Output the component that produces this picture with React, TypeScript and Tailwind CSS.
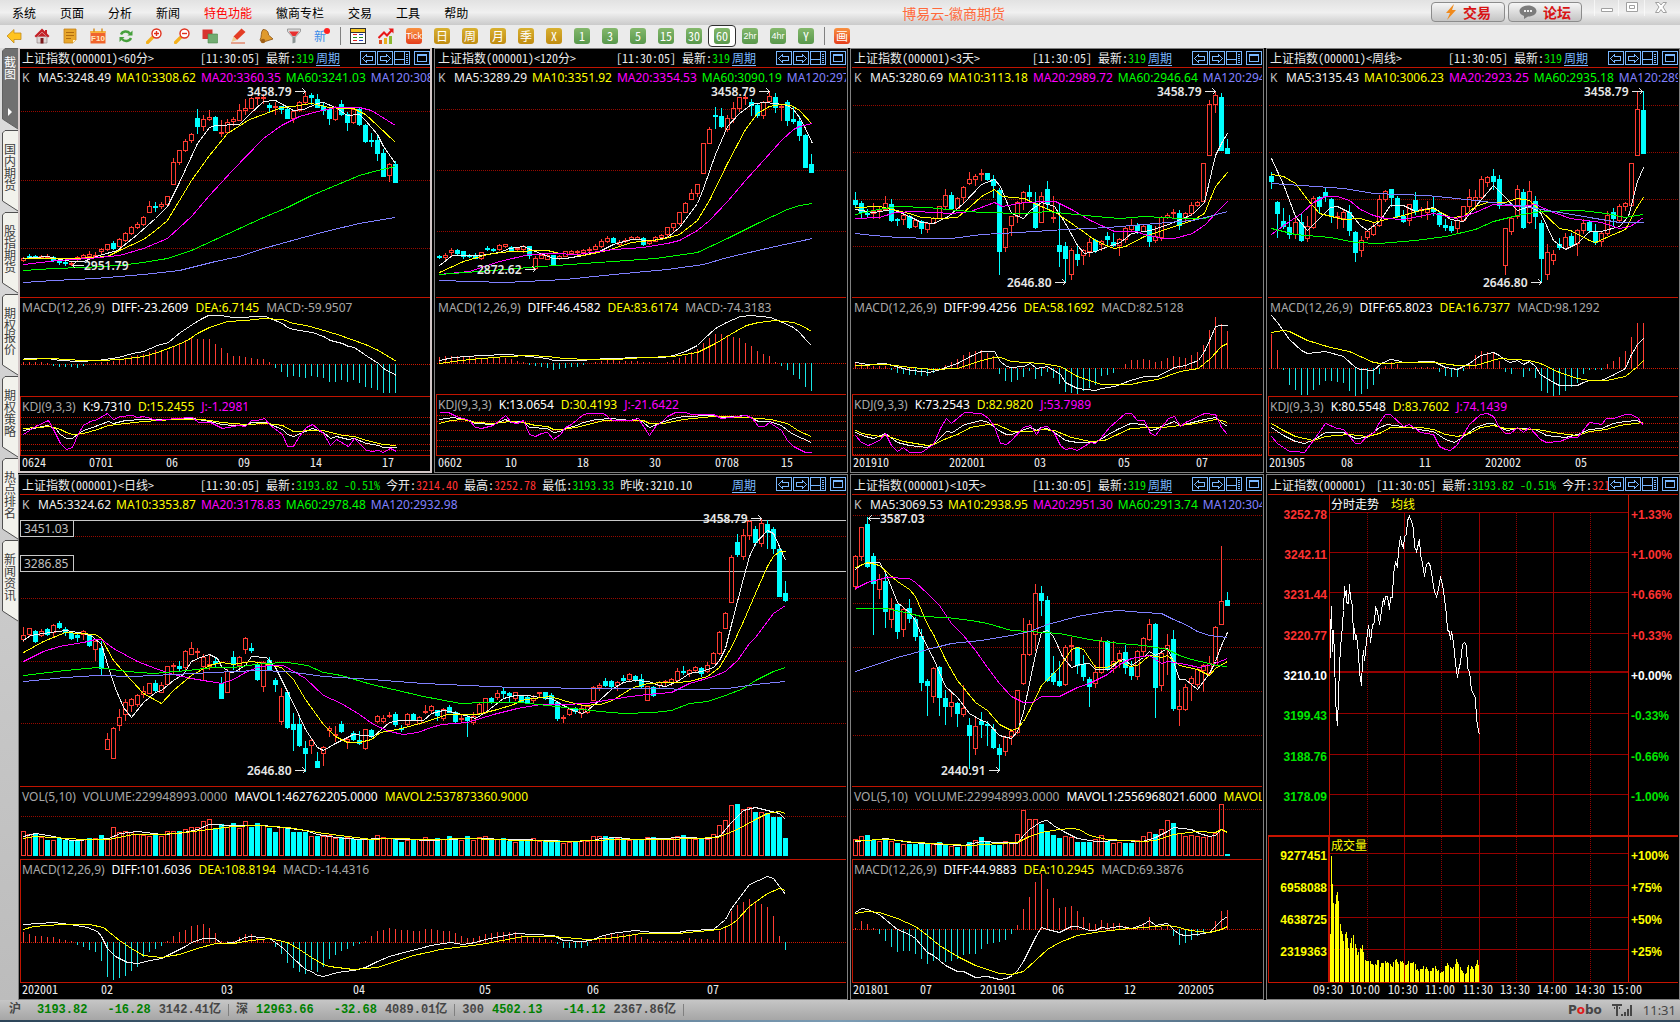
import React from 'react';
import clsx from 'clsx';

const UP = '#ff3c32';
const DOWN = '#00ffff';
const WHITE = '#f0f0f0';
const YELLOW = '#ffff00';
const MAGENTA = '#ff00ff';
const GREEN = '#00ff00';
const BLUE = '#8080ff';
const MA_COLORS = [WHITE, YELLOW, MAGENTA, GREEN, BLUE];

const TICK_FONT = "font-['Noto_Sans_Mono_CJK_SC','Noto_Sans_CJK_SC',monospace]";
const LABEL_FONT = "font-['Noto_Sans',sans-serif]";

// Readings are kept on a finer grid than the screen: px = (v - origin) / unit
interface Frame {
  x0: number;
  y0: number;
  kx: number;
  ky: number;
}

interface Mark {
  text: string;
  x: number;
  y: number;
  tip: number;
}

interface Tick {
  text: string;
  x: number;
}

interface LabelPart {
  text: string;
  color: string;
}

type PaneData =
  | { kind: 'k'; height: string; frame: Frame; label: LabelPart[]; grid: number[]; candles: string; lines: string[]; marks: Mark[]; levels?: boolean }
  | { kind: 'vol'; height: string; frame: Frame; label: LabelPart[]; grid: number[]; candles: string; tops: number[]; base: number; lines: string[] }
  | { kind: 'macd'; height: string; frame: Frame; label: LabelPart[]; zero: number; bars: number; diff: string; dea: string; boxed?: boolean }
  | { kind: 'kdj'; height: string; frame: Frame; label: LabelPart[]; grid: number[]; lines: string[] };

interface ChartData {
  title: string;
  wide?: boolean;
  selected?: boolean;
  tall?: boolean;
  panes: PaneData[];
  ticks: Tick[];
}

const toPoints = (s: string) => s.split(' ').map((p) => p.split(',').map(Number));

const px = (f: Frame, x: number) => Math.round((x - f.x0) / f.kx) + 0.5;
const py = (f: Frame, y: number) => Math.floor((y - f.y0) / f.ky) + 0.5;

function valueAt(points: number[][], x: number) {
  for (let i = 1; i < points.length; i++) {
    if (x <= points[i][0]) {
      const [ax, ay] = points[i - 1];
      const [bx, by] = points[i];
      return ay + ((by - ay) * (x - ax)) / (bx - ax);
    }
  }
  return points[points.length - 1][1];
}

const maLabel = (v: string[]): LabelPart[] => [
  { text: 'K', color: '#c0c0c0' },
  ...['MA5', 'MA10', 'MA20', 'MA60', 'MA120'].map((n, i) => ({ text: `${n}:${v[i]}`, color: MA_COLORS[i] })),
];
const macdLabel = (a: string, b: string, c: string): LabelPart[] => [
  { text: 'MACD(12,26,9)', color: '#a8a8a8' },
  { text: `DIFF:${a}`, color: '#fff' },
  { text: `DEA:${b}`, color: YELLOW },
  { text: `MACD:${c}`, color: '#a8a8a8' },
];
const kdjLabel = (a: string, b: string, c: string): LabelPart[] => [
  { text: 'KDJ(9,3,3)', color: '#a8a8a8' },
  { text: `K:${a}`, color: '#fff' },
  { text: `D:${b}`, color: YELLOW },
  { text: `J:${c}`, color: MAGENTA },
];
const volLabel = (a: string, b: string, c: string): LabelPart[] => [
  { text: 'VOL(5,10)', color: '#a8a8a8' },
  { text: `VOLUME:${a}`, color: '#a8a8a8' },
  { text: `MAVOL1:${b}`, color: '#fff' },
  { text: `MAVOL2:${c}`, color: YELLOW },
];

// ---- candles: u/d, then high, body top, body bottom, low ----

const K60 =
  'u771 775 781 785,d762 768 774 776,d766 770 772 774,u766 768 771 772,u762 768 770 774,d768 772 780 783,d779 783 788 793,d783 786 790 795,u785 789 794 797,u768 772 779 780,u764 766 772 776,u754 762 768 770,u758 765 768 772,u745 748 755 760,u733 734 747 752,d724 729 745 748,u716 718 738 740,u696 700 722 724,u680 682 700 702,u666 672 682 684,u648 652 674 676,u603 619 638 638,d608 618 621 635,u608 614 620 626,u588 589 612 616,u474 487 553 553,u451 451 488 494,u418 424 452 455,u399 404 422 427,d327 354 380 400,u346 357 380 392,u330 351 358 360,d350 351 392 392,u362 396 398 410,u357 368 397 398,u352 357 363 375,u312 331 361 362,u297 326 332 344,u292 294 325 325,u291 292 295 314,u282 291 294 310,d310 316 322 334,u308 319 322 344,d318 320 328 341,d326 327 354 354,u333 334 355 368,u305 308 332 334,u273 288 308 312,d281 287 291 312,d283 297 321 322,d306 319 330 342,d326 328 356 372,u319 321 359 361,d300 312 342 346,d336 342 368 392,u322 328 368 369,d326 328 374 376,d374 376 425 428,d399 420 425 440,d402 420 461 482,d448 459 530 530,u489 492 527 545,d483 492 548 548';

const K120 =
  'd766 769 772 776,u760 767 771 777,u744 750 757 765,d748 750 760 764,d753 754 770 776,d764 767 769 772,d760 765 775 776,u756 758 775 777,d738 744 749 752,d746 748 752 755,u734 736 748 752,u732 734 738 742,d739 741 750 752,u742 745 749 755,u735 740 747 756,d738 739 765 774,u770 775 805 808,u763 766 774 776,u762 766 777 778,d766 767 795 795,u766 770 775 778,u753 755 768 770,u752 754 760 762,u750 753 757 765,u748 752 756 766,u742 747 752 754,u734 739 748 749,u718 724 740 742,u709 715 723 726,d713 714 726 727,u720 726 732 738,u715 720 724 726,u708 713 717 719,u708 712 717 718,d711 716 733 736,u720 724 730 734,u710 713 724 725,u702 706 713 715,u681 682 702 712,u670 671 683 690,u636 637 671 672,u608 611 637 638,u567 580 598 598,u552 553 580 590,u430 431 520 520,u382 388 430 430,d321 345 349 386,d324 348 380 381,u345 355 387 395,u307 324 355 368,u291 292 325 334,u282 292 293 314,d297 308 315 345,d310 316 345 352,u304 308 347 355,u273 289 304 306,d279 293 323 336,u316 320 323 360,d300 306 360 377,d318 357 365 370,d350 365 407 422,d404 405 503 503,d462 494 518 518';

const K3D =
  'd576 600 614 622,d605 610 638 656,d628 640 641 650,u610 635 641 655,u622 630 635 655,u590 611 628 630,d598 612 662 664,d655 657 662 675,u644 645 658 674,d646 649 682 686,u657 661 678 683,d662 665 686 699,u668 669 689 697,u651 655 669 669,u619 620 654 656,u568 586 620 624,d576 586 624 628,u592 594 624 625,u560 563 593 610,u518 538 550 552,u522 530 538 555,u507 520 524 541,d519 521 538 541,d527 538 555 592,d565 570 753 822,u684 685 743 755,u649 650 676 705,u605 608 650 668,u573 577 608 627,d556 578 590 600,d576 611 683 684,u576 590 666 668,d543 569 610 625,u590 652 656 666,d612 735 753 798,d726 740 776 848,u744 751 823 838,d736 764 777 795,u748 751 765 793,u715 728 754 770,d718 720 752 758,u720 724 733 752,d698 710 719 735,d700 727 735 740,u714 718 735 767,u682 686 718 727,u657 675 688 692,d670 675 692 700,u672 678 693 695,d672 675 724 738,u680 708 722 726,u648 652 712 720,u641 645 653 656,u628 636 641 652,d630 640 676 688,u638 640 655 660,u608 617 640 645,u603 606 616 620,u489 490 604 604,u302 314 466 466,u274 287 314 338,d280 291 450 450,d417 444 461 461';

const KWEEK =
  'd517 530 543 565,d605 606 640 713,d626 663 680 684,d645 681 702 714,u648 668 703 715,d642 666 720 723,u648 679 716 723,u588 595 683 686,d589 592 620 640,d563 578 590 605,d594 597 650 666,u637 649 649 684,u630 637 655 682,d617 636 692 706,d695 698 758 785,u710 720 752 770,u690 694 713 718,u668 680 704 706,u586 598 675 678,u572 575 597 604,d567 568 593 620,d590 596 648 651,d630 649 664 667,u612 614 660 675,d576 601 630 643,u621 627 628 652,u603 626 636 658,d590 626 634 645,d634 641 674 678,d658 675 681 690,d665 678 690 697,u656 660 685 700,u618 620 660 662,u568 592 620 635,u571 593 600 627,u530 539 592 599,u530 533 547 558,d507 530 545 567,d527 538 617 624,u684 685 797 822,u649 656 694 704,u555 568 650 654,d567 577 683 684,u543 575 667 670,d588 605 650 684,d660 669 776 848,u732 758 823 838,u750 762 782 793,d714 733 743 747,u700 713 745 748,d700 708 735 740,u688 690 731 767,u657 670 690 700,d660 667 692 698,d672 696 728 732,u695 700 725 738,u635 645 700 706,d626 636 656 680,u614 619 660 668,u606 609 620 632,u489 490 617 618,u274 328 466 466,d275 330 461 461';

const KDAY =
  'u446 471 480 487,u449 450 468 474,d457 458 486 490,u454 458 471 472,d450 452 466 470,u440 441 462 476,d429 435 448 450,d447 453 462 470,d462 463 479 482,d466 469 476 486,u457 458 468 480,d466 467 497 500,u480 488 509 540,d488 508 565 582,u747 766 794 795,u732 734 820 820,u680 703 726 740,u651 661 694 712,u650 651 668 687,u638 641 667 672,u616 630 638 646,u605 606 634 636,d599 605 627 628,u604 613 632 633,u557 559 609 610,u550 556 559 582,d543 559 565 570,u514 516 561 566,u489 507 524 525,u506 516 518 532,u525 532 558 595,u526 552 558 566,d532 544 550 560,d590 607 650 650,u566 571 632 633,d516 533 550 566,u530 533 556 570,u476 478 510 522,d493 507 514 518,d550 553 594 598,u545 547 615 628,d532 541 569 570,d591 597 610 628,u620 642 715 722,d630 632 730 734,d692 722 738 796,d702 724 783 784,d772 790 806 855,u766 769 782 806,d803 827 844 846,u786 789 804 838,u728 735 740 758,u728 750 752 772,d713 724 744 746,u760 766 770 790,d744 747 764 768,d742 768 776 780,u737 738 792 793,d737 740 753 760,u698 700 714 718,u698 705 714 718,u690 696 698 702,d688 693 724 728,d726 733 735 744,u692 694 722 726,d692 693 710 712,u700 703 720 724,u670 686 688 692,' +
  'u670 672 684 690,d682 683 696 712,u678 681 706 712,d670 674 688 690,d687 688 713 718,u694 706 709 717,d697 704 711 758,u690 700 718 722,u662 666 692 693,u648 650 690 692,d645 650 660 664,u626 634 646 652,d617 628 636 648,d632 634 640 658,u631 633 648 654,d639 641 658 660,d644 647 659 662,u640 648 655 662,u631 632 634 646,d632 633 648 652,d636 639 662 665,d660 661 707 712,u697 704 707 718,u677 679 695 697,d674 677 686 692,u665 678 692 702,u670 673 688 692,u614 617 654 656,u606 611 618 626,d591 602 611 614,d599 602 616 620,u602 603 612 626,d585 593 598 602,u579 581 596 600,d585 586 594 600,d582 594 614 620,u614 615 654 656,d614 618 641 642,u602 604 612 618,u598 601 604 616,u591 595 604 612,u565 572 598 600,d557 571 573 580,u566 569 579 587,u558 560 568 572,d562 565 578 586,u548 555 571 574,u517 521 549 550,u460 461 521 525,u406 407 450 451,u244 248 376 377,d182 205 239 247,u170 185 245 254,u143 146 186 196,d160 170 207 215,u138 151 208 218,d143 156 178 222,d162 168 223 238,d213 227 358 358,d318 352 372 374';

const K10D =
  'u242 245 331 340,u162 163 245 258,d136 156 275 277,d238 245 323 466,u296 310 340 364,d286 318 402 448,u366 393 424 446,d382 383 459 479,u390 397 452 473,d367 392 422 434,d420 425 474 483,d452 472 604 627,d595 602 613 698,u560 563 643 661,d558 560 645 698,d626 648 672 724,u634 660 672 700,d660 664 692 728,u612 677 694 700,d706 727 755 848,u702 728 792 807,d690 715 723 760,d713 722 724 783,d722 737 787 790,d780 790 808 854,u758 759 800 811,u737 742 758 780,u626 627 745 748,u422 524 606 608,u427 439 525 527,u324 350 467 514,d330 352 372 412,d358 372 598 602,d530 579 600 608,d545 600 613 615,u497 504 610 612,u475 497 500 540,d503 505 554 577,d528 551 587 598,d588 595 615 672,u556 575 607 618,u477 486 575 578,d485 487 566 568,u486 545 564 574,u513 521 539 560,d498 517 562 578,d545 562 585 595,u513 515 586 596,u477 478 516 526,u424 438 482 484,d437 440 618 703,u514 521 612 627,u467 498 511 582,d457 480 676 684,u626 671 681 726,u610 617 681 682,u586 592 606 656,u563 566 610 614,u552 556 568 630,u531 550 578 580,u445 447 555 556,u216 374 438 440,d347 370 385 386';

const VOL_DAY = [
  1026, 1034, 1032, 1044, 1051, 1051, 1046, 1051, 1051, 1052, 1050, 1046, 1047, 1038, 1048, 1016, 1029, 1026, 1030, 1034, 1038, 1041, 1034, 1040, 1026, 1026, 1026, 1020, 1016, 1016, 998, 992,
  1018, 1007, 1016, 1003, 1018, 998, 1014, 1004, 1010, 1018, 1028, 1016, 1018, 1028, 1030, 1028, 1040, 1040, 1041, 1038, 1046, 1042, 1044, 1048, 1048, 1048, 1049, 1038, 1044, 1046, 1048, 1058,
  1052, 1050, 1050, 1044, 1050, 1046, 1050, 1040, 1048, 1052, 1040, 1052, 1044, 1041, 1048, 1048, 1047, 1054, 1058, 1050, 1052, 1046, 1055, 1052, 1052, 1053, 1060, 1058, 1055, 1056, 1054, 1041,
  1041, 1040, 1044, 1047, 1046, 1052, 1048, 1049, 1044, 1042, 1048, 1046, 1046, 1040, 1038, 1046, 1049, 1048, 1050, 1035, 1009, 995, 953, 949, 964, 958, 971, 972, 974, 986, 986, 1045,
];

const VOL_10D = [
  1050, 1041, 1038, 1052, 1055, 1052, 1055, 1060, 1064, 1062, 1062, 1060, 1062, 1063, 1058, 1064, 1069, 1071, 1065, 1057, 1052, 1043, 1058, 1065, 1065, 1055, 1060, 1035, 967, 992, 992, 1006,
  1026, 1037, 1045, 1041, 1044, 1057, 1058, 1057, 1050, 1038, 1054, 1061, 1058, 1060, 1060, 1052, 1041, 1029, 1034, 1021, 995, 1004, 1033, 1040, 1038, 1041, 1044, 1040, 1032, 950, 1091,
];

const CHARTS: ChartData[] = [
  {
    title: '上证指数(000001)<60分>',
    selected: true,
    ticks: [
      { text: '0624', x: 2 },
      { text: '0701', x: 69 },
      { text: '06', x: 146 },
      { text: '09', x: 218 },
      { text: '14', x: 290 },
      { text: '17', x: 362 },
    ],
    panes: [
      {
        kind: 'k',
        height: 'h-[229px]',
        frame: { x0: 57.6, y0: 204, kx: 2.8, ky: 3 },
        label: maLabel(['3248.49', '3308.62', '3360.35', '3241.03', '3085.37']),
        grid: [334, 541, 745],
        candles: K60,
        marks: [
          { text: '3458.79', x: 692, y: 275, tip: 855 },
          { text: '2951.79', x: 236, y: 797, tip: 203 },
        ],
        lines: [
          '66,776 133,770 170,778 200,783 234,783 280,766 330,750 385,703 435,654 470,620 503,548 536,470 553,430 586,383 603,377 670,372 700,344 738,304 771,301 821,331 850,328 889,311 905,307 939,322 973,345 1006,344 1023,362 1057,402 1074,440 1107,491',
          '66,776 150,774 217,776 300,770 335,752 402,718 435,690 469,660 503,600 536,540 586,466 637,399 700,357 738,343 788,322 821,319 872,311 922,322 956,325 990,325 1023,344 1057,377 1107,428',
          '66,793 160,780 250,774 335,765 402,745 469,714 536,650 586,585 650,512 738,415 788,376 838,348 889,333 939,323 1006,322 1040,331 1107,377',
          '66,811 150,806 234,802 335,796 402,786 469,774 536,752 603,718 670,685 738,651 805,622 872,585 939,557 1006,526 1057,510 1107,499',
          '66,847 150,842 268,834 402,824 503,810 603,784 670,768 738,744 838,714 922,690 1006,670 1107,653',
        ],
      },
      {
        kind: 'macd',
        height: 'h-[98px]',
        frame: { x0: 60, y0: 24, kx: 3, ky: 3 },
        label: macdLabel('-23.2609', '6.7145', '-59.9507'),
        zero: 223,
        bars: 63,
        diff: '69,205 140,204 180,211 235,215 290,210 355,203 395,190 430,183 470,166 503,157 540,128 575,102 600,89 625,76 660,77 700,81 795,79 845,100 862,112 880,118 935,127 970,139 990,152 1025,160 1045,170 1062,172 1100,198 1133,220 1150,235 1187,256',
        dea: '69,208 150,206 250,212 300,211 360,208 430,198 470,187 520,170 560,151 590,131 627,113 680,95 735,91 790,86 845,88 880,101 917,105 960,117 1010,132 1095,162 1133,182 1187,214',
      },
      {
        kind: 'kdj',
        height: 'h-[58px]',
        frame: { x0: 60, y0: 321, kx: 3, ky: 3 },
        label: kdjLabel('9.7310', '15.2455', '-1.2981'),
        grid: [382, 403, 433, 463, 481],
        lines: [
          '69,422 140,405 165,416 180,433 198,444 215,444 235,430 250,420 275,412 325,394 340,400 375,390 430,387 470,388 580,385 627,393 665,403 700,405 735,407 752,398 795,396 845,418 862,434 880,440 900,430 935,415 970,426 990,444 1007,438 1045,449 1062,445 1097,461 1133,465 1150,472 1187,472',
          '69,416 150,409 180,418 198,428 215,433 250,431 290,418 325,406 375,399 430,393 520,388 605,389 665,396 735,402 800,399 845,406 880,424 935,420 970,422 1025,436 1062,440 1097,452 1150,463 1187,466',
          '69,433 105,410 143,391 160,417 180,460 198,478 215,472 235,430 250,406 270,394 290,389 322,371 340,387 360,378 395,377 412,381 430,379 470,390 525,384 575,383 595,397 630,398 665,415 700,410 718,405 735,409 752,391 770,391 792,385 810,406 845,434 862,468 880,468 898,440 917,413 935,402 970,430 990,465 1007,448 1045,469 1062,446 1097,481 1115,485 1133,481 1150,487 1170,476 1187,485',
        ],
      },
    ],
  },
  {
    title: '上证指数(000001)<120分>',
    ticks: [
      { text: '0602', x: 2 },
      { text: '10', x: 69 },
      { text: '18', x: 141 },
      { text: '30', x: 213 },
      { text: '0708', x: 279 },
      { text: '15', x: 345 },
    ],
    panes: [
      {
        kind: 'k',
        height: 'h-[229px]',
        frame: { x0: 45.6, y0: 204, kx: 2.8, ky: 3 },
        label: maLabel(['3289.29', '3351.92', '3354.53', '3090.19', '2974.61']),
        grid: [328, 511, 694],
        candles: K120,
        marks: [
          { text: '3458.79', x: 816, y: 275, tip: 978 },
          { text: '2872.62', x: 160, y: 809, tip: 323 },
        ],
        lines: [
          '54,797 90,766 172,767 222,757 250,745 290,740 323,753 373,776 407,774 457,766 508,750 541,733 592,718 650,722 693,711 726,683 777,610 793,565 827,463 861,380 895,341 928,313 961,307 995,311 1029,315 1045,327 1062,352 1079,385 1097,431',
          '54,817 121,784 188,764 250,755 357,751 390,761 457,767 525,751 592,727 676,717 726,702 777,661 810,601 861,490 911,387 945,340 978,320 1012,314 1040,315 1062,330 1097,374',
          '54,822 138,814 222,785 306,764 373,760 440,764 541,748 625,742 693,731 726,720 777,692 810,660 861,604 911,541 961,480 1012,420 1045,388 1062,378 1097,371',
          '54,823 200,812 340,798 500,788 659,776 777,757 861,716 945,670 1029,628 1062,616 1097,610',
          '54,842 240,848 407,838 541,824 693,809 793,793 861,773 995,739 1097,715',
        ],
      },
      {
        kind: 'macd',
        height: 'h-[96px]',
        frame: { x0: 19, y0: 24, kx: 3, ky: 3 },
        label: macdLabel('46.4582', '83.6174', '-74.3183'),
        zero: 220,
        bars: 63,
        diff: '28,211 70,203 155,197 230,193 270,196 353,205 371,211 450,211 530,204 640,201 700,202 730,196 765,184 803,166 820,149 855,116 890,97 930,79 965,76 1020,83 1050,94 1090,113 1108,127 1130,151 1145,166',
        dea: '28,220 90,212 155,205 230,200 300,197 353,199 400,205 480,209 560,207 640,203 730,200 803,188 855,160 915,124 950,106 985,96 1035,91 1090,97 1120,109 1145,125',
      },
      {
        kind: 'kdj',
        height: 'h-[60px]',
        frame: { x0: 19, y0: 315, kx: 3, ky: 3 },
        label: kdjLabel('13.0654', '30.4193', '-21.6422'),
        grid: [376, 394, 421, 451, 469],
        lines: [
          '28,388 70,382 118,391 137,401 190,404 225,388 245,396 280,394 298,411 353,416 371,428 390,424 407,415 440,406 460,398 500,388 545,385 600,391 625,386 658,412 695,397 730,384 760,380 850,376 875,381 950,377 985,395 1018,393 1055,407 1072,420 1090,433 1145,458',
          '28,400 60,392 100,389 137,397 190,400 240,394 280,396 315,406 353,409 371,419 400,418 450,408 520,392 640,390 658,400 700,400 760,389 850,379 950,381 1020,388 1072,400 1108,424 1145,440',
          '28,367 55,368 80,378 118,391 137,411 155,415 190,406 225,376 245,397 262,400 280,392 298,432 315,440 335,430 353,427 371,448 390,434 407,411 425,403 460,374 475,370 520,371 548,391 605,392 625,386 658,437 680,406 695,397 712,380 735,368 765,367 785,374 850,373 875,385 950,376 968,384 985,410 1003,409 1018,397 1055,422 1072,451 1090,469 1127,488 1145,488',
        ],
      },
    ],
  },
  {
    title: '上证指数(000001)<3天>',
    ticks: [
      { text: '201910', x: 1 },
      { text: '202001', x: 97 },
      { text: '03', x: 182 },
      { text: '05', x: 266 },
      { text: '07', x: 344 },
    ],
    panes: [
      {
        kind: 'k',
        height: 'h-[229px]',
        frame: { x0: 20.4, y0: 204, kx: 1.867, ky: 3 },
        label: maLabel(['3280.69', '3113.18', '2989.72', '2946.64', '2943.09']),
        grid: [316, 457, 598, 739],
        candles: K3D,
        marks: [
          { text: '3458.79', x: 590, y: 275, tip: 699 },
          { text: '2646.80', x: 310, y: 848, tip: 419 },
        ],
        lines: [
          '26,627 60,638 95,628 127,650 150,666 172,669 200,650 228,610 262,553 285,537 296,560 318,640 340,655 352,632 374,606 397,619 419,670 441,735 453,761 475,755 498,738 520,728 542,700 576,690 610,672 655,642 677,607 699,465 710,430 721,400',
          '26,622 70,620 127,640 150,652 184,656 217,652 240,618 262,590 285,569 300,589 341,595 363,612 400,637 441,681 475,720 498,740 509,746 531,738 565,709 610,684 655,662 677,640 699,560 721,517',
          '26,656 70,651 100,638 138,633 206,641 240,633 285,608 300,620 341,606 385,604 400,604 430,628 464,661 509,693 550,694 565,703 600,715 621,716 655,700 680,673 699,640 721,604',
          '26,642 60,631 105,618 160,622 217,631 262,638 341,641 385,634 419,640 475,650 520,654 565,650 632,655 677,654 700,642 721,633',
          '26,701 60,706 105,711 172,716 206,714 262,704 330,697 419,688 498,683 565,674 655,660 680,652 721,634',
        ],
      },
      {
        kind: 'macd',
        height: 'h-[96px]',
        frame: { x0: 20.4, y0: 24, kx: 1.867, ky: 3 },
        label: macdLabel('99.4256', '58.1692', '82.5128'),
        zero: 235,
        bars: 63,
        diff: '26,217 50,222 82,219 100,230 130,240 150,245 165,248 185,238 200,230 217,221 240,198 262,184 285,184 296,213 307,228 318,233 340,229 352,221 363,235 385,228 408,253 419,276 430,286 441,296 475,301 486,294 510,290 540,272 565,260 590,259 621,233 643,226 666,210 677,184 688,145 699,109 710,105 721,105',
        dea: '26,226 82,222 130,231 172,239 217,235 262,211 285,202 296,203 318,214 374,221 408,230 441,259 486,284 540,284 565,273 590,268 632,245 666,235 688,205 710,170 721,160',
      },
      {
        kind: 'kdj',
        height: 'h-[60px]',
        frame: { x0: 20.4, y0: 315, kx: 1.867, ky: 3 },
        label: kdjLabel('73.2543', '82.9820', '53.7989'),
        grid: [376, 400, 436, 472, 493],
        lines: [
          '26,427 45,440 60,444 82,431 105,458 127,467 161,471 172,462 195,425 208,427 230,404 262,391 274,398 285,411 296,425 307,433 318,433 335,420 352,413 363,421 374,413 390,418 419,451 441,457 475,457 498,433 515,418 540,400 565,404 576,420 587,418 598,409 621,395 632,406 677,389 699,382 710,396 721,410',
          '26,420 40,430 70,440 82,435 116,453 161,466 172,463 195,446 217,433 240,413 274,402 290,404 320,424 352,424 374,418 397,420 430,441 464,453 490,450 515,432 540,416 576,412 600,412 632,405 660,401 699,389 710,390 721,398',
          '26,436 37,456 50,466 70,450 82,431 94,467 105,483 116,472 127,487 150,488 172,464 184,416 195,386 206,400 230,367 262,370 274,386 285,410 296,460 307,463 318,451 340,411 352,406 363,432 374,411 385,410 397,430 408,466 419,478 430,476 441,481 464,457 475,460 486,443 500,412 531,371 542,371 553,390 565,391 576,430 587,436 598,411 610,385 621,379 632,409 643,398 677,370 699,373 710,412 721,433',
        ],
      },
    ],
  },
  {
    title: '上证指数(000001)<周线>',
    ticks: [
      { text: '201905', x: 1 },
      { text: '08', x: 73 },
      { text: '11', x: 151 },
      { text: '202002', x: 217 },
      { text: '05', x: 307 },
    ],
    panes: [
      {
        kind: 'k',
        height: 'h-[229px]',
        frame: { x0: 798.4, y0: 204, kx: 1.867, ky: 3 },
        label: maLabel(['3135.43', '3006.23', '2923.25', '2935.18', '2898.40']),
        grid: [316, 457, 598, 739],
        candles: KWEEK,
        marks: [
          { text: '3458.79', x: 1389, y: 275, tip: 1497 },
          { text: '2646.80', x: 1199, y: 848, tip: 1308 },
        ],
        lines: [
          '804,474 826,552 848,650 871,690 893,654 915,622 927,618 949,638 971,677 983,690 1005,664 1027,616 1050,617 1072,635 1106,622 1139,657 1162,663 1184,620 1218,557 1240,592 1263,630 1285,620 1307,636 1330,720 1352,749 1375,730 1397,695 1420,694 1453,680 1470,650 1487,545 1498,501',
          '804,522 826,528 848,550 871,598 893,641 938,658 971,656 994,666 1027,655 1050,646 1083,630 1106,625 1139,652 1162,650 1184,620 1207,608 1240,606 1263,595 1285,600 1307,630 1341,686 1363,692 1397,722 1408,726 1442,702 1464,688 1487,618 1498,591',
          '804,704 837,665 860,640 882,606 904,590 927,590 949,600 971,628 994,645 1016,654 1050,657 1106,640 1150,654 1184,637 1218,614 1240,616 1270,620 1296,614 1330,638 1363,654 1420,668 1453,686 1475,680 1498,652',
          '804,686 848,702 915,712 960,728 1005,731 1072,722 1128,708 1184,688 1218,664 1263,645 1307,634 1380,631 1430,640 1464,653 1498,642',
          '804,549 860,556 938,566 994,580 1095,585 1184,600 1263,616 1330,634 1397,651 1453,667 1498,667',
        ],
      },
      {
        kind: 'macd',
        height: 'h-[98px]',
        frame: { x0: 798.4, y0: 24, kx: 1.867, ky: 3 },
        label: macdLabel('65.8023', '16.7377', '98.1292'),
        zero: 235,
        bars: 63,
        diff: '804,76 815,96 837,148 860,182 871,190 904,184 938,200 960,232 971,238 994,241 1010,220 1027,209 1039,211 1050,217 1106,215 1128,232 1151,238 1173,220 1195,196 1218,187 1229,195 1240,212 1251,217 1263,210 1274,223 1285,215 1296,228 1307,252 1330,278 1341,286 1375,286 1386,276 1397,272 1420,272 1440,257 1464,235 1475,200 1487,162 1498,145',
        dea: '804,127 826,121 837,125 871,151 915,171 949,184 994,217 1010,219 1061,217 1106,217 1151,226 1185,226 1229,206 1285,212 1307,220 1341,246 1375,265 1400,271 1430,270 1464,258 1487,230 1498,212',
      },
      {
        kind: 'kdj',
        height: 'h-[58px]',
        frame: { x0: 798.4, y0: 321, kx: 1.867, ky: 3 },
        label: kdjLabel('80.5548', '83.7602', '74.1439'),
        grid: [382, 400, 427, 454, 472],
        lines: [
          '804,413 826,437 848,455 865,461 885,447 904,427 938,428 960,446 983,443 1005,413 1020,403 1061,412 1090,420 1106,425 1128,448 1145,456 1162,440 1184,413 1207,400 1218,400 1229,413 1245,421 1263,415 1296,418 1318,436 1352,441 1375,432 1397,418 1420,416 1442,400 1464,394 1487,390 1498,402',
          '804,401 826,420 848,438 882,452 904,440 949,434 983,438 1005,430 1027,413 1083,413 1106,419 1128,434 1151,440 1173,430 1195,413 1218,407 1240,414 1300,418 1341,431 1375,437 1397,425 1430,418 1453,407 1498,397',
          '804,438 815,461 837,485 848,485 865,487 882,450 904,401 927,416 938,418 960,460 971,459 983,437 994,430 1005,396 1016,374 1027,373 1050,410 1061,403 1083,426 1106,433 1117,468 1128,478 1139,482 1151,462 1173,404 1195,373 1207,370 1218,380 1229,412 1240,431 1251,430 1263,412 1274,427 1285,412 1307,448 1318,457 1341,455 1363,441 1375,443 1397,398 1420,404 1430,385 1442,384 1464,374 1475,374 1487,382 1498,406',
        ],
      },
    ],
  },
  {
    title: '上证指数(000001)<日线>',
    wide: true,
    tall: true,
    ticks: [
      { text: '202001', x: 2 },
      { text: '02', x: 81 },
      { text: '03', x: 201 },
      { text: '04', x: 333 },
      { text: '05', x: 459 },
      { text: '06', x: 567 },
      { text: '07', x: 687 },
    ],
    panes: [
      {
        kind: 'k',
        height: 'h-[291px]',
        frame: { x0: 60, y0: 71, kx: 3, ky: 2.84 },
        label: maLabel(['3324.62', '3353.87', '3178.83', '2978.48', '2932.98']),
        grid: [188, 365, 544, 720],
        levels: true,
        candles: KDAY,
        marks: [
          { text: '3458.79', x: 2110, y: 137, tip: 2282 },
          { text: '2646.80', x: 742, y: 854, tip: 915 },
        ],
        lines: [
          '70,483 90,470 150,462 196,457 250,463 275,472 304,495 325,560 345,620 370,675 394,702 430,660 466,633 484,626 520,598 550,580 574,544 600,532 628,524 650,535 664,557 690,574 700,576 736,556 754,530 798,533 826,560 862,628 898,700 916,738 952,787 970,797 1006,777 1060,752 1120,757 1168,716 1196,711 1270,711 1294,692 1330,683 1348,685 1384,695 1425,705 1456,690 1510,650 1546,640 1580,641 1620,645 1654,648 1690,668 1720,683 1745,691 1762,682 1800,653 1834,622 1870,604 1905,598 1945,601 1978,612 1996,614 2032,600 2068,578 2104,571 2140,560 2158,540 2176,508 2194,440 2230,308 2248,245 2266,208 2302,171 2320,180 2338,218 2356,257',
          '70,519 130,487 196,461 286,467 304,478 340,540 394,598 430,636 484,663 520,625 574,584 628,556 664,547 700,552 754,544 790,549 844,560 880,596 916,652 970,724 1006,757 1042,773 1078,773 1114,764 1140,746 1204,735 1270,716 1340,695 1430,694 1492,680 1540,666 1564,654 1600,649 1650,642 1690,656 1745,670 1800,665 1836,654 1870,636 1900,618 1940,605 1996,604 2032,603 2068,600 2120,586 2158,560 2194,503 2230,430 2266,350 2302,273 2320,246 2338,232 2356,231',
          '70,544 130,516 178,501 250,490 286,480 304,481 340,508 412,543 466,565 520,581 574,592 628,600 664,606 700,596 736,574 772,562 808,554 850,556 916,592 970,640 1024,664 1078,695 1120,723 1168,742 1210,752 1250,746 1294,732 1324,722 1400,716 1480,693 1550,678 1620,666 1690,667 1762,663 1834,651 1890,644 1942,638 2014,631 2068,605 2140,586 2176,572 2212,540 2248,493 2266,476 2302,430 2320,408 2356,384',
          '70,584 196,570 290,561 380,571 460,577 560,570 640,561 700,561 790,549 862,548 920,556 970,574 1024,584 1114,608 1180,622 1270,642 1380,664 1450,660 1560,660 1640,670 1720,676 1800,685 1870,691 1960,688 2014,682 2068,664 2122,657 2176,640 2230,620 2266,598 2320,571 2356,560',
          '70,600 196,590 290,585 400,586 520,580 640,574 772,569 862,573 970,586 1114,596 1270,606 1400,612 1540,617 1640,617 1720,621 1960,620 2080,624 2180,620 2266,610 2356,600',
        ],
      },
      {
        kind: 'vol',
        height: 'h-[72px]',
        frame: { x0: 60, y0: 900, kx: 3, ky: 2.84 },
        label: volLabel('229948993.0000', '462762205.0000', '537873360.9000'),
        grid: [984],
        candles: KDAY,
        tops: VOL_DAY,
        base: 1095,
        lines: [
          '70,1040 106,1033 160,1040 214,1051 290,1050 325,1045 360,1032 412,1026 484,1036 538,1032 590,1022 628,1007 700,1008 790,1008 844,1016 916,1023 950,1034 1006,1044 1078,1048 1150,1046 1290,1052 1400,1046 1560,1050 1710,1056 1780,1052 1800,1046 1850,1043 1900,1048 2050,1043 2130,1046 2160,1038 2194,1000 2230,968 2266,958 2302,966 2338,976 2356,993',
          '70,1046 106,1040 160,1042 250,1050 325,1048 400,1036 484,1035 556,1030 628,1021 700,1011 772,1008 862,1014 952,1028 1040,1040 1114,1048 1168,1045 1290,1050 1400,1046 1560,1052 1700,1056 1850,1050 2000,1048 2150,1044 2212,1020 2266,993 2302,976 2338,970 2356,975',
        ],
      },
      {
        kind: 'macd',
        height: 'h-[122px]',
        boxed: true,
        frame: { x0: 60, y0: 1108, kx: 3, ky: 2.84 },
        label: macdLabel('101.6036', '108.8194', '-14.4316'),
        zero: 1342,
        bars: 128,
        diff: '70,1291 160,1286 210,1290 260,1299 290,1310 304,1325 322,1358 345,1382 380,1398 412,1402 450,1392 484,1388 520,1370 556,1353 574,1342 610,1330 646,1332 664,1344 700,1342 736,1327 754,1326 808,1332 826,1342 850,1360 880,1388 916,1418 934,1424 952,1436 970,1438 1010,1428 1060,1422 1096,1414 1132,1396 1168,1382 1222,1369 1260,1360 1290,1350 1350,1342 1390,1347 1425,1343 1456,1333 1500,1324 1546,1316 1600,1320 1660,1323 1690,1336 1745,1340 1770,1337 1800,1326 1834,1318 1906,1308 1960,1315 2032,1315 2068,1308 2140,1304 2176,1276 2194,1245 2248,1178 2302,1154 2320,1161 2338,1183 2356,1206',
        dea: '70,1305 100,1298 180,1291 268,1292 310,1299 358,1338 394,1360 430,1378 484,1384 538,1376 592,1360 646,1345 700,1344 754,1337 808,1332 862,1342 898,1362 934,1386 970,1404 988,1411 1060,1418 1132,1412 1186,1396 1240,1380 1280,1372 1320,1362 1440,1347 1520,1335 1570,1326 1660,1326 1760,1334 1820,1332 1870,1325 1920,1317 2032,1316 2158,1306 2194,1290 2212,1276 2248,1240 2302,1203 2338,1190 2356,1195',
      },
    ],
  },
  {
    title: '上证指数(000001)<10天>',
    tall: true,
    ticks: [
      { text: '201801', x: 1 },
      { text: '07', x: 68 },
      { text: '201901', x: 128 },
      { text: '06', x: 200 },
      { text: '12', x: 272 },
      { text: '202005', x: 326 },
    ],
    panes: [
      {
        kind: 'k',
        height: 'h-[291px]',
        frame: { x0: 19, y0: 71, kx: 3, ky: 2.84 },
        label: maLabel(['3069.53', '2938.95', '2951.30', '2913.74', '3040.12']),
        grid: [129, 254, 379, 504, 629, 754],
        candles: K10D,
        marks: [
          { text: '3587.03', x: 103, y: 138, tip: 66 },
          { text: '2440.91', x: 287, y: 854, tip: 460 },
        ],
        lines: [
          '28,283 46,268 82,264 100,262 118,292 154,376 190,405 208,428 226,470 262,535 298,616 334,645 370,691 406,710 424,718 460,754 496,763 514,744 532,690 568,523 586,462 604,455 622,472 650,530 676,560 700,551 730,550 748,567 790,567 820,540 835,537 856,555 892,533 910,515 928,526 964,508 982,545 1000,596 1018,596 1054,622 1072,600 1090,577 1108,545 1126,497 1144,461',
          '28,277 64,264 100,270 154,316 190,338 208,360 244,438 262,467 298,537 334,598 388,661 424,684 460,722 496,739 514,733 532,715 550,683 586,612 610,590 640,560 676,510 694,504 712,511 748,561 784,560 820,541 850,557 874,555 910,527 946,533 964,528 1000,556 1054,567 1090,585 1108,565 1144,543',
          '28,337 64,320 120,305 190,308 208,320 244,352 280,385 316,436 352,470 388,512 424,562 460,606 496,642 532,660 560,659 586,643 640,642 694,618 730,607 784,582 820,551 856,535 910,526 946,549 964,545 1018,551 1060,561 1100,553 1144,535',
          '28,394 120,393 190,408 226,417 300,420 376,428 424,436 496,456 550,458 640,464 730,480 820,492 892,498 928,503 964,511 1000,526 1036,539 1090,549 1110,556 1144,559',
          '28,573 154,532 244,510 316,493 406,484 496,470 550,459 604,439 694,416 784,402 820,398 890,404 946,407 982,424 1018,439 1054,458 1090,470 1144,475',
        ],
      },
      {
        kind: 'vol',
        height: 'h-[72px]',
        frame: { x0: 19, y0: 900, kx: 3, ky: 2.84 },
        label: volLabel('229948993.0000', '2556968021.6000', '2567341127.3000'),
        grid: [964],
        candles: K10D,
        tops: VOL_10D,
        base: 1095,
        lines: [
          '28,1055 64,1051 120,1046 190,1057 290,1063 352,1065 406,1056 514,1060 532,1037 550,1022 586,998 604,996 622,1010 658,1028 694,1046 750,1055 820,1053 890,1055 928,1044 964,1027 982,1016 1036,1020 1060,1033 1090,1040 1108,1038 1126,1022 1144,1030',
          '28,1053 130,1050 208,1057 316,1062 370,1066 460,1061 514,1058 550,1041 586,1029 640,1022 676,1018 700,1022 730,1037 784,1048 892,1056 928,1053 982,1034 1054,1026 1108,1030 1126,1022 1144,1030',
        ],
      },
      {
        kind: 'macd',
        height: 'h-[122px]',
        boxed: true,
        frame: { x0: 19, y0: 1108, kx: 3, ky: 2.84 },
        label: macdLabel('44.9883', '10.2945', '69.3876'),
        zero: 1305,
        bars: 63,
        diff: '28,1257 46,1245 64,1248 100,1262 120,1280 154,1305 190,1320 208,1332 244,1370 262,1380 298,1407 334,1424 352,1426 388,1441 424,1439 460,1447 480,1445 500,1437 514,1423 532,1396 550,1363 568,1327 586,1300 604,1305 640,1313 676,1297 694,1297 730,1309 748,1308 766,1299 784,1302 820,1297 856,1302 892,1290 910,1280 928,1293 964,1289 982,1304 1000,1320 1018,1323 1054,1320 1090,1313 1108,1298 1126,1280 1144,1269',
        dea: '28,1259 64,1255 100,1257 154,1274 208,1298 244,1322 280,1350 334,1383 388,1407 460,1430 496,1433 532,1424 568,1394 604,1362 640,1343 694,1322 766,1312 820,1306 892,1299 964,1293 1000,1299 1018,1305 1054,1311 1090,1313 1126,1306 1144,1296',
      },
    ],
  },
];

// ---- drawing helpers ----

function GridLine({ y, color = '#960a00' }: { y: number; color?: string }) {
  return <line x1="1" x2="100%" y1={y} y2={y} stroke={color} strokeDasharray="1 1" />;
}

function Curve({ frame, points, color }: { frame: Frame; points: string; color: string }) {
  const d = toPoints(points)
    .map(([x, y]) => `${px(frame, x)},${py(frame, y)}`)
    .join(' ');
  return <polyline points={d} fill="none" stroke={color} strokeWidth="1" />;
}

function Candles({ frame, data }: { frame: Frame; data: string }) {
  return (
    <g>
      {data.split(',').map((row, i) => {
        const up = row[0] === 'u';
        const [hi, top, bottom, lo] = row.slice(1).split(' ').map((v) => py(frame, Number(v)));
        const x = 3 + 6 * i;
        const h = Math.max(bottom - top, 0.5);
        return up ? (
          <g key={i} stroke={UP} fill="none">
            <line x1={x + 0.5} x2={x + 0.5} y1={hi - 0.5} y2={top} />
            <line x1={x + 0.5} x2={x + 0.5} y1={bottom} y2={lo + 0.5} />
            <rect x={x - 1.5} y={top} width="4" height={h} />
          </g>
        ) : (
          <g key={i} fill={DOWN}>
            <rect x={x} y={hi - 0.5} width="1" height={lo - hi + 1} />
            <rect x={x - 2} y={top - 0.5} width="5" height={Math.max(bottom - top + 1, 2)} />
          </g>
        );
      })}
    </g>
  );
}

function Volumes({ frame, data, tops, base }: { frame: Frame; data: string; tops: number[]; base: number }) {
  const rows = data.split(',');
  const floor = py(frame, base);
  return (
    <g>
      {tops.map((t, i) => {
        const y = py(frame, t);
        const x = 3 + 6 * i;
        return rows[i][0] === 'u' ? (
          <rect key={i} x={x - 1.5} y={y} width="4" height={floor - y} fill="none" stroke={UP} />
        ) : (
          <rect key={i} x={x - 2} y={y - 0.5} width="5" height={floor - y + 1} fill={DOWN} />
        );
      })}
    </g>
  );
}

// bar = 2 * (DIFF - DEA)
function Histogram({ frame, diff, dea, zero, bars }: { frame: Frame; diff: string; dea: string; zero: number; bars: number }) {
  const a = toPoints(diff);
  const b = toPoints(dea);
  const y0 = py(frame, zero);
  return (
    <g>
      {Array.from({ length: bars }, (_, i) => {
        const x = 3 + 6 * i;
        const raw = frame.x0 + x * frame.kx;
        const h = Math.round((2 * (valueAt(b, raw) - valueAt(a, raw))) / frame.ky);
        if (h === 0) return null;
        return <rect key={i} x={x} y={h > 0 ? y0 - 0.5 - h : y0 - 0.5} width="1" height={Math.abs(h) + 1} fill={h > 0 ? UP : '#19e6e6'} />;
      })}
    </g>
  );
}

function PriceMark({ frame, mark }: { frame: Frame; mark: Mark }) {
  const x = px(frame, mark.x) - 0.5;
  const y = py(frame, mark.y);
  const tip = px(frame, mark.tip);
  const right = tip > x;
  const from = right ? tip - 11 : tip + 11;
  const s = right ? -1 : 1;
  return (
    <g>
      <text x={x} y={y + 4} fill="#e8e8e8" className="font-['Noto_Sans',sans-serif] text-[12px] font-semibold">
        {mark.text}
      </text>
      <path d={`M${from} ${y}H${tip}M${tip + 3 * s} ${y - 3}L${tip} ${y}L${tip + 3 * s} ${y + 3}`} fill="none" stroke="#e8e8e8" />
    </g>
  );
}

function LevelLines() {
  return (
    <g stroke="#c8c8c8">
      <line x1="0" x2="100%" y1="25.5" y2="25.5" />
      <line x1="0" x2="100%" y1="76.5" y2="76.5" />
      <rect x="0.5" y="25.5" width="53" height="16" fill="#000" />
      <rect x="0.5" y="60.5" width="53" height="16" fill="#000" />
      <g stroke="none" fill="#c0c0c0" className={clsx(LABEL_FONT, 'text-[12px]')}>
        <text x="4" y="38">3451.03</text>
        <text x="4" y="73">3286.85</text>
      </g>
    </g>
  );
}

function Pane({ pane }: { pane: PaneData }) {
  const f = pane.frame;
  return (
    <div className="grid overflow-hidden border-t border-[#c01400]">
      <svg className={clsx('w-full [grid-area:1/1]', pane.height)} shapeRendering="crispEdges">
        {pane.kind === 'k' && (
          <>
            {pane.grid.map((g) => <GridLine key={g} y={py(f, g)} />)}
            {pane.levels && <LevelLines />}
            <Candles frame={f} data={pane.candles} />
            {pane.lines.map((l, i) => <Curve key={i} frame={f} points={l} color={MA_COLORS[i]} />)}
            {pane.marks.map((m) => <PriceMark key={m.text} frame={f} mark={m} />)}
          </>
        )}
        {pane.kind === 'vol' && (
          <>
            {pane.grid.map((g) => <GridLine key={g} y={py(f, g)} />)}
            <Volumes frame={f} data={pane.candles} tops={pane.tops} base={pane.base} />
            {pane.lines.map((l, i) => <Curve key={i} frame={f} points={l} color={MA_COLORS[i]} />)}
          </>
        )}
        {pane.kind === 'macd' && (
          <>
            <GridLine y={py(f, pane.zero)} color="#d01800" />
            <Histogram frame={f} diff={pane.diff} dea={pane.dea} zero={pane.zero} bars={pane.bars} />
            <Curve frame={f} points={pane.diff} color={WHITE} />
            <Curve frame={f} points={pane.dea} color={YELLOW} />
            {pane.boxed && <line x1="0.5" x2="0.5" y1="0" y2="100%" stroke="#c01400" />}
          </>
        )}
        {pane.kind === 'kdj' && (
          <>
            {pane.grid.map((g) => <GridLine key={g} y={py(f, g)} color="#c81400" />)}
            {pane.lines.map((l, i) => <Curve key={i} frame={f} points={l} color={MA_COLORS[i]} />)}
            <line x1="0.5" x2="0.5" y1="0" y2="100%" stroke="#c01400" />
          </>
        )}
      </svg>
      <div
        className={clsx(
          'flex h-5 items-center overflow-hidden pl-0.5 text-[12px] whitespace-nowrap [grid-area:1/1]',
          pane.kind === 'k' ? 'gap-[5px]' : 'gap-[7px]',
          LABEL_FONT,
        )}
      >
        {pane.label.map((p) => (
          <span key={p.text} className={clsx('shrink-0', p.text === 'K' && 'w-[11px]')} style={{ color: p.color }}>
            {p.text}
          </span>
        ))}
      </div>
    </div>
  );
}

// ---- panel header ----

function HeaderButtons() {
  const shapes = [
    { name: '上一个', d: 'M2.5 7.5L6.5 3.5V5.5H12.5V9.5H6.5V11.5Z' },
    { name: '下一个', d: 'M13.5 7.5L9.5 3.5V5.5H3.5V9.5H9.5V11.5Z' },
    { name: '侧栏', d: 'M0.5 8.5H10.5M10.5 1V14M12 3.5H14M12 5.5H14M12 7.5H14M12 9.5H14M12 11.5H14' },
    { name: '最大化', d: 'M3.5 3.5H12.5V10.5H3.5ZM3.5 4.5H12.5' },
  ];
  return (
    <div className="flex shrink-0 gap-px bg-black">
      {shapes.map((s) => (
        <button key={s.name} type="button" aria-label={s.name} className="last:ml-[3px]">
          <svg width="16" height="15" viewBox="0 0 16 15" fill="none" stroke="#7ab8ff" shapeRendering="crispEdges">
            <path d="M0.5 0.5H15.5V13.5H0.5Z" />
            <path d={s.d} />
          </svg>
        </button>
      ))}
    </div>
  );
}

const QUOTE_FIELDS = [
  { label: '最新:', value: '3193.82', color: 'text-[#00e600]' },
  { label: '', value: '-0.51%', color: 'text-[#00e600]' },
  { label: '今开:', value: '3214.40', color: 'text-[#ff3232]' },
  { label: '最高:', value: '3252.78', color: 'text-[#ff3232]' },
  { label: '最低:', value: '3193.33', color: 'text-[#00e600]' },
  { label: '昨收:', value: '3210.10', color: '' },
];

interface PanelHeaderProps {
  title: string;
  fields: number;
  intraday?: boolean;
  tall?: boolean;
}

function PanelHeader({ title, fields, intraday, tall }: PanelHeaderProps) {
  return (
    <div className={clsx('flex items-center overflow-hidden pl-0.5 text-[12px] leading-none whitespace-nowrap text-[#ececec]', TICK_FONT, tall ? 'h-[19px]' : 'h-[18px]')}>
      <h2 className={clsx('shrink-0', intraday ? 'w-[106px]' : 'w-[178px]')}>{title}</h2>
      <p className="flex min-w-0 flex-1 gap-1.5 overflow-hidden py-1">
        <span>[11:30:05]</span>
        {QUOTE_FIELDS.slice(0, fields).map((q) => (
          <span key={q.value}>
            {q.label}
            <span className={q.color}>{q.value}</span>
          </span>
        ))}
      </p>
      {!intraday && (
        <button type="button" className="mr-5 ml-0.5 text-[#7ab8ff] underline underline-offset-2">
          周期
        </button>
      )}
      <HeaderButtons />
    </div>
  );
}

function Panel({ selected, wide, children }: { selected?: boolean; wide?: boolean; children: React.ReactNode }) {
  return (
    <section
      className={clsx(
        'min-w-0 overflow-hidden bg-black',
        selected ? 'border-x-2 border-t border-b-2 border-[#d4c8c8]' : 'border border-[#808080] px-px pb-px',
        wide && 'col-span-2',
      )}
    >
      {children}
    </section>
  );
}

function ChartPanel({ chart }: { chart: ChartData }) {
  return (
    <Panel selected={chart.selected} wide={chart.wide}>
      <PanelHeader title={chart.title} fields={chart.wide ? 6 : 1} tall={chart.tall} />
      {chart.panes.map((p, i) => (
        <Pane key={i} pane={p} />
      ))}
      <div className="border-t border-[#c01400]">
        <svg className={clsx('h-[15px] w-full text-[12px]', TICK_FONT)} fill="#ececec">
          {chart.ticks.map((t) => (
            <text key={t.x} x={t.x} y="11">
              {t.text}
            </text>
          ))}
        </svg>
      </div>
    </Panel>
  );
}

// ---- intraday ----

const INTRADAY: Frame = { x0: 38, y0: 71, kx: 3, ky: 2.84 };

const INTRADAY_LINE =
  '223,533 223,460 227,387 229,515 232,455 235,530 239,645 242,700 244,726 247,640 250,560 253,500 258,478 262,400 265,331 268,355 271,342 273,376 277,380 280,325 285,365 289,385 293,480 296,450 299,482 303,470 307,520 312,575 316,613 320,540 323,512 326,542 331,488 337,443 341,460 344,490 350,440 355,435 359,390 365,403 370,438 376,400 382,366 385,382 390,358 396,358 400,397 404,362 409,362 413,295 418,262 424,274 428,230 433,188 437,210 442,220 447,190 451,184 456,142 460,132 467,145 472,165 476,217 482,232 490,198 494,240 500,265 507,302 512,268 519,262 525,275 531,310 537,345 542,359 548,340 553,302 560,325 566,365 572,410 576,455 580,460 583,482 587,458 594,490 599,550 604,590 608,570 613,548 620,495 626,489 631,498 635,565 640,573 647,625 653,634 658,650 663,705 667,743 671,752';

const INTRADAY_VOLUME =
  '223,1320 226,1095 229,1172 232,1230 235,1247 241,1208 244,1198 247,1220 250,1270 256,1304 262,1336 265,1326 271,1312 274,1325 277,1358 286,1330 289,1356 292,1315 295,1338 301,1352 304,1378 310,1358 316,1358 319,1344 322,1370 331,1395 340,1386 349,1403 361,1403 364,1386 373,1406 386,1392 398,1400 408,1408 418,1386 426,1398 436,1392 448,1408 460,1392 466,1402 475,1389 481,1416 490,1422 500,1411 512,1413 520,1424 536,1409 546,1420 557,1428 566,1411 575,1400 581,1413 592,1414 601,1389 607,1400 614,1412 620,1426 630,1434 635,1402 640,1417 648,1409 655,1416 664,1392 668,1410 671,1368';

const PRICE_AXIS = [
  { y: 127, price: '3252.78', pct: '+1.33%', color: '#ff3232' },
  { y: 240, price: '3242.11', pct: '+1.00%', color: '#ff3232' },
  { y: 354, price: '3231.44', pct: '+0.66%', color: '#ff3232' },
  { y: 470, price: '3220.77', pct: '+0.33%', color: '#ff3232' },
  { y: 584, price: '3210.10', pct: '+0.00%', color: '#ffffff' },
  { y: 698, price: '3199.43', pct: '-0.33%', color: '#00e600' },
  { y: 814, price: '3188.76', pct: '-0.66%', color: '#00e600' },
  { y: 928, price: '3178.09', pct: '-1.00%', color: '#00e600' },
  { y: 1096, price: '9277451', pct: '+100%', color: YELLOW },
  { y: 1186, price: '6958088', pct: '+75%', color: YELLOW },
  { y: 1277, price: '4638725', pct: '+50%', color: YELLOW },
  { y: 1368, price: '2319363', pct: '+25%', color: YELLOW },
];

const TIMES = ['09:30', '10:00', '10:30', '11:00', '11:30', '13:30', '14:00', '14:30', '15:00'];

function IntradayPanel() {
  const f = INTRADAY;
  const left = px(f, 220);
  const right = px(f, 1117);
  const split = py(f, 1037);
  const floor = py(f, 1455);
  const volume = toPoints(INTRADAY_VOLUME);
  return (
    <Panel>
      <PanelHeader title="上证指数(000001)" fields={3} intraday tall />
      <div className="border-t border-[#c01400]">
        <svg className="h-[503px] w-full" shapeRendering="crispEdges">
          <g stroke="#960000">
            {[121, 235, 348, 464, 691, 808, 921, 1090, 1180, 1272, 1361].map((y) => (
              <line key={y} x1={left} x2={right} y1={py(f, y)} y2={py(f, y)} />
            ))}
            <rect x={left} y={py(f, 576) - 1} width={right - left} height="1" fill="#960000" />
            {[445, 670, 892].map((x) => (
              <line key={x} x1={px(f, x)} x2={px(f, x)} y1={py(f, 121)} y2={floor} />
            ))}
            {[334, 556, 781, 1003].map((x) => (
              <line key={x} x1={px(f, x)} x2={px(f, x)} y1={py(f, 121)} y2={floor} strokeDasharray="1 1" />
            ))}
          </g>
          <g stroke="#c81400" fill="none">
            <line x1={left} x2={left} y1="0" y2={floor} />
            <line x1={right} x2={right} y1="0" y2={floor} />
            <line x1="0" x2="100%" y1={split} y2={split} strokeWidth="2" />
            <line x1="0" x2="100%" y1={floor} y2={floor} />
            <rect x="0.5" y={split} width={left - 1.5} height={floor - split} />
            <line x1={left - 1} x2={left - 1} y1={split} y2={floor} />
          </g>
          {Array.from({ length: 150 }, (_, i) => {
            if (i % 5 === 4) return null;
            const y = py(f, valueAt(volume, 223 + 3 * i)) + (i % 3) - 1;
            return <rect key={i} x={left + 0.5 + i} y={y} width="1" height={floor - 0.5 - y} fill={YELLOW} />;
          })}
          <Curve frame={f} points={INTRADAY_LINE} color="#ffffff" />
          <g className="font-['Liberation_Sans',sans-serif] text-[12px] font-bold">
            {PRICE_AXIS.map((a) => (
              <g key={a.y} fill={a.color}>
                <text x="59" y={py(f, a.y) + 4} textAnchor="end">{a.price}</text>
                <text x="363" y={py(f, a.y) + 4}>{a.pct}</text>
              </g>
            ))}
          </g>
          <g className={clsx('text-[12px]', TICK_FONT)}>
            <text x="63" y="14" fill="#fff">分时走势</text>
            <text x="123" y="14" fill={YELLOW}>均线</text>
            <text x="63" y="355" fill={YELLOW}>成交量</text>
            {TIMES.map((t, i) => (
              <text key={t} x={60 + Math.round(i * 37.4)} y="499" fill="#ececec" textAnchor="middle">
                {t}
              </text>
            ))}
          </g>
        </svg>
      </div>
    </Panel>
  );
}

// ---- top bars ----

const MENUS = ['系统', '页面', '分析', '新闻', '特色功能', '徽商专栏', '交易', '工具', '帮助'];

function MenuBar() {
  return (
    <header className="flex h-[25px] items-center bg-gradient-to-b from-[#e2e2e2] via-[#f0f0f0] to-[#cacaca]">
      <nav className="flex gap-6 pl-3 text-[12px] leading-none text-black">
        {MENUS.map((m) => (
          <button key={m} type="button" className={m === '特色功能' ? 'text-[#ff0000]' : ''}>
            {m}
          </button>
        ))}
      </nav>
      <h1 className="flex-1 pl-2 text-center text-[14px] leading-none text-[#ff6a3c]">博易云-徽商期货</h1>
      <div className="flex items-start self-stretch">
        <div className="mt-0.5 flex gap-[3px] text-[14px] leading-none font-bold text-[#d81414]">
          <button type="button" className="flex h-5 w-[74px] items-center justify-center gap-1.5 rounded border border-[#8c8c8c] bg-gradient-to-b from-[#f6f6f6] to-[#c4c4c4]">
            <svg width="12" height="16" viewBox="0 0 12 16">
              <path d="M9 0L1 9H5L2 16L11 6H7Z" fill="#f08a1c" />
            </svg>
            交易
          </button>
          <button type="button" className="flex h-5 w-[74px] items-center justify-center gap-1.5 rounded border border-[#8c8c8c] bg-gradient-to-b from-[#f6f6f6] to-[#c4c4c4]">
            <svg width="18" height="14" viewBox="0 0 18 14">
              <path d="M9 0.5C14 0.5 17.5 3 17.5 6S14 11.5 9 11.5L5 14V11C2 10 0.5 8 0.5 6C0.5 3 4 0.5 9 0.5Z" fill="#7c7c7c" />
              <path d="M5 5H7V7H5ZM8 5H10V7H8ZM11 5H13V7H11Z" fill="#eee" />
            </svg>
            论坛
          </button>
        </div>
        <div className="ml-3 flex pr-1 text-[#9a9a9a]">
          <button type="button" aria-label="最小化" className="flex h-4 w-6 justify-center border-l border-white/60">
            <svg width="14" height="16" viewBox="0 0 14 16" fill="#fff" stroke="#a0a0a0">
              <path d="M1.500 8.500H12.500V11.500H1.500Z" />
            </svg>
          </button>
          <button type="button" aria-label="还原" className="flex h-4 w-[26px] justify-center border-l border-white/60">
            <svg width="14" height="16" viewBox="0 0 14 16" fill="#fff" stroke="#a0a0a0">
              <path d="M1.500 2.500H12.500V11.500H1.500ZM4.500 5.500H9.500V8.500H4.500Z" />
            </svg>
          </button>
          <button type="button" aria-label="关闭" className="flex h-4 w-8 justify-center border-l border-white/60">
            <svg width="14" height="16" viewBox="0 0 14 16" fill="#fff" stroke="#a0a0a0">
              <path d="M1.500 2.500H5L7 5L9 2.500H12.500L9 7L12.500 12.500H9L7 9.500L5 12.500H1.500L5 7Z" />
            </svg>
          </button>
        </div>
      </div>
    </header>
  );
}

const TOOL_ICONS: { name: string; icon: React.ReactNode }[] = [
  {
    name: '后退',
    icon: <path d="M1 8L8 1.500V5H15V11.500H8V15Z" fill="#ffc420" stroke="#c08a1c" strokeWidth="0.800" />,
  },
  {
    name: '主页',
    icon: (
      <>
        <path d="M3 8H13V15H3Z" fill="#dcd6d6" stroke="#8a7a7a" strokeWidth="0.600" />
        <path d="M8 0.500L0.500 8L2 9.500L8 4L14 9.500L15.500 8L13 5.500V2H11V3.500Z" fill="#c42026" />
        <path d="M3.500 8.500L8 4.500L12.500 8.500Z" fill="#c42026" />
        <path d="M6.500 10H9.500V15.500H6.500Z" fill="#7c1a1c" />
      </>
    ),
  },
  {
    name: '资讯',
    icon: (
      <>
        <path d="M2 1H14V12L11 15H2Z" fill="#e8a72c" stroke="#c4821a" strokeWidth="0.800" />
        <path d="M4 4.500H12M4 7.500H12M4 10.500H9" stroke="#b06c10" fill="none" />
        <path d="M11 15V12H14Z" fill="#fff0c8" />
      </>
    ),
  },
  {
    name: 'F10',
    icon: (
      <>
        <path d="M0.500 3H15.500V15.500H0.500Z" fill="#f0642c" />
        <path d="M0.500 3H15.500V5H0.500Z" fill="#f8b43c" />
        <path d="M4 0.500V4M12 0.500V4" stroke="#d49028" strokeWidth="1.500" />
        <text x="8" y="13" textAnchor="middle" fill="#ffe9c0" className="font-['Liberation_Sans',sans-serif] text-[8px] font-bold">F10</text>
      </>
    ),
  },
  {
    name: '刷新',
    icon: (
      <g fill="none" stroke="#46a03c" strokeWidth="2.400">
        <path d="M3 6.500C4.500 3 9.500 2.500 12 5.500" />
        <path d="M13 10C11.500 13.500 6.500 14 4 11" />
        <path d="M14.500 2.500V7.500H9.500Z" fill="#46a03c" stroke="none" />
        <path d="M1.500 14V9H6.500Z" fill="#46a03c" stroke="none" />
      </g>
    ),
  },
  {
    name: '放大',
    icon: (
      <>
        <path d="M1.500 14.500L6.500 9.500" stroke="#f4b01c" strokeWidth="3.200" strokeLinecap="round" />
        <circle cx="10.500" cy="5.500" r="4.500" fill="#fff" stroke="#e0301c" strokeWidth="1.400" />
        <path d="M8 5.500H13M10.500 3V8" stroke="#e0301c" strokeWidth="1.400" />
      </>
    ),
  },
  {
    name: '缩小',
    icon: (
      <>
        <path d="M1.500 14.500L6.500 9.500" stroke="#f4b01c" strokeWidth="3.200" strokeLinecap="round" />
        <circle cx="10.500" cy="5.500" r="4.500" fill="#fff" stroke="#e0301c" strokeWidth="1.400" />
        <path d="M8 5.500H13" stroke="#e0301c" strokeWidth="1.400" />
      </>
    ),
  },
  {
    name: '叠加',
    icon: (
      <>
        <path d="M0.500 1.500H10.500V11H0.500Z" fill="#d83430" />
        <path d="M6 6H15.500V15H6Z" fill="#72ac72" stroke="#4c8a4c" strokeWidth="0.600" />
      </>
    ),
  },
  {
    name: '画线',
    icon: (
      <>
        <path d="M1 15H15" stroke="#e07050" strokeWidth="1.200" />
        <path d="M11.500 0.500L15.500 4L7 12L3.500 8.500Z" fill="#e43c24" />
        <path d="M3.500 8.500L7 12L1.500 14Z" fill="#f0cc90" />
      </>
    ),
  },
  {
    name: '预警',
    icon: (
      <>
        <path d="M5 1.500C9 1.500 10.500 4 10.500 7L15 11L4 14.500L2 12C4 9 2.500 4 5 1.500Z" fill="#e09a2c" stroke="#8a5010" strokeWidth="0.800" />
        <circle cx="5" cy="13" r="2.200" fill="#a06018" />
      </>
    ),
  },
  {
    name: '筛选',
    icon: (
      <>
        <path d="M1.500 1H14.500V3.500L9.500 9H6.500L1.500 3.500Z" fill="#d8d8d8" stroke="#8c8c8c" strokeWidth="0.800" />
        <path d="M3 3.500H13L9.500 8H6.500Z" fill="#e83030" />
        <path d="M6.500 9H9.500V14.500L6.500 15.500Z" fill="#8c9494" />
      </>
    ),
  },
  {
    name: '新功能',
    icon: (
      <>
        <text x="0" y="13" fill="#3c8ce8" className="font-['Noto_Sans_CJK_SC',sans-serif] text-[12px]">新</text>
        <circle cx="13" cy="3" r="3" fill="#ff2020" />
      </>
    ),
  },
];

const TABLE_ICONS: { name: string; icon: React.ReactNode }[] = [
  {
    name: '报价表',
    icon: (
      <g shapeRendering="crispEdges">
        <path d="M0.500 0.500H15.500V15.500H0.500Z" fill="#fff" stroke="#333" />
        <path d="M1 1H15V4H1Z" fill="#f4c420" />
        <path d="M3 6.500H7M3 12.500H7" stroke="#e02020" />
        <path d="M3 9.500H7M9 9.500H13" stroke="#209020" />
        <path d="M9 6.500H13M9 12.500H13" stroke="#2040c0" />
        <path d="M1 4.500H15" stroke="#333" />
      </g>
    ),
  },
  {
    name: '走势图',
    icon: (
      <>
        <path d="M1 12H4V16H1Z" fill="#e05020" />
        <path d="M6 10H9V16H6Z" fill="#e8b020" />
        <path d="M11 8H14V16H11Z" fill="#8cb830" />
        <path d="M0.500 10L6 4.500L9 7.500L14 2" fill="none" stroke="#e81818" strokeWidth="2" />
        <path d="M10.500 0.500H15.500V5.500Z" fill="#e81818" />
      </>
    ),
  },
];

const PERIODS = [
  { text: 'Tick', tone: 'red' },
  { text: '日', tone: 'gold' },
  { text: '周', tone: 'gold' },
  { text: '月', tone: 'gold' },
  { text: '季', tone: 'gold' },
  { text: 'X', tone: 'gold' },
  { text: '1', tone: 'green' },
  { text: '3', tone: 'green' },
  { text: '5', tone: 'green' },
  { text: '15', tone: 'green' },
  { text: '30', tone: 'green' },
  { text: '60', tone: 'green', active: true },
  { text: '2hr', tone: 'green' },
  { text: '4hr', tone: 'green' },
  { text: 'Y', tone: 'green' },
];

function Badge({ text, tone }: { text: string; tone: string }) {
  return (
    <span
      className={clsx(
        'flex size-4 items-center justify-center rounded-[3px] leading-none text-white',
        text.length > 2
          ? "font-['Liberation_Sans_Narrow','Liberation_Sans',sans-serif] text-[9px]"
          : "font-['Noto_Sans_Mono_CJK_SC','Noto_Sans_CJK_SC',sans-serif] text-[12px]",
        tone === 'gold' && 'bg-gradient-to-b from-[#d8b030] to-[#c08c10]',
        tone === 'green' && 'bg-gradient-to-b from-[#84b86c] to-[#58984c]',
        tone === 'red' && 'bg-gradient-to-b from-[#f89040] to-[#e43c1c]',
      )}
    >
      {text}
    </span>
  );
}

function ToolIcon({ name, children }: { name: string; children: React.ReactNode }) {
  return (
    <button type="button" aria-label={name} className="flex w-7 items-center justify-center">
      <svg width="16" height="16" viewBox="0 0 16 16">
        {children}
      </svg>
    </button>
  );
}

function Toolbar() {
  return (
    <div className="flex h-[23px] bg-[#ebebeb] pb-px">
      {TOOL_ICONS.map((t) => (
        <ToolIcon key={t.name} name={t.name}>{t.icon}</ToolIcon>
      ))}
      <i className="my-0.5 mr-[3px] ml-1 w-px bg-[#808080]" />
      {TABLE_ICONS.map((t) => (
        <ToolIcon key={t.name} name={t.name}>{t.icon}</ToolIcon>
      ))}
      {PERIODS.map((p) => (
        <button
          key={p.text}
          type="button"
          aria-pressed={Boolean(p.active)}
          className={clsx('flex w-7 items-center justify-center', p.active && 'rounded border border-[#303030] bg-white')}
        >
          <Badge text={p.text} tone={p.tone} />
        </button>
      ))}
      <i className="my-0.5 mr-[3px] ml-1 w-px bg-[#808080]" />
      <button type="button" className="flex w-7 items-center justify-center">
        <Badge text="画" tone="red" />
      </button>
    </div>
  );
}

const TABS = ['截图', '国内期货', '股指期货', '期权报价', '期权策略', '热点排名', '新闻资讯'];

function SideTabs() {
  return (
    <aside className="w-[18px] shrink-0 bg-gradient-to-b from-[#dedede] to-[#bcbcbc] pl-0.5">
      {TABS.map((t, i) => (
        <button
          key={t}
          type="button"
          className={clsx('grid h-[82px] w-4 justify-items-center text-[12px] leading-[12px]', i === 0 ? 'text-white' : 'text-[#3c3c3c]')}
        >
          <svg className="h-[82px] w-4 [grid-area:1/1]" viewBox="0 0 16 82">
            <path d="M16 0.500H3L0.500 3V71L16 81" fill={i === 0 ? '#707070' : '#f2f2ec'} stroke={i === 0 ? '#606060' : '#505050'} />
            {i === 0 && <path d="M6 60L10 64L6 68Z" fill="#fff" />}
          </svg>
          <span className={clsx('w-3 [grid-area:1/1]', i === 0 ? 'pt-2' : 'pt-[13px]')}>{t}</span>
        </button>
      ))}
    </aside>
  );
}

const QUOTES = [
  { name: '沪', price: '3193.82', change: '-16.28', amount: '3142.41亿' },
  { name: '深', price: '12963.66', change: '-32.68', amount: '4089.01亿' },
  { name: '300', price: '4502.13', change: '-14.12', amount: '2367.86亿' },
];

function StatusBar() {
  return (
    <footer>
      <div className="flex h-5 items-center bg-gradient-to-b from-[#c6c6c6] to-[#a6a6a6] pr-1 pl-[9px] font-['Liberation_Mono','Noto_Sans_CJK_SC',monospace] text-[12px] leading-none font-bold text-[#464646]">
        {QUOTES.map((q) => (
          <div key={q.name} className="flex items-center">
            <span className={q.name === '沪' ? 'mr-4' : 'mr-2'}>{q.name}</span>
            <span className="text-[#008000]">{q.price}</span>
            <span className="ml-5 text-[#008000]">{q.change}</span>
            <span className="ml-2">{q.amount}</span>
            <i className="mx-[7px] h-3 w-px bg-[#808080]" />
          </div>
        ))}
        <div className="ml-auto flex items-center gap-2.5">
          <span className="font-['DejaVu_Sans',sans-serif]">
            P<span className="text-[#e01c1c]">o</span>bo
          </span>
          <svg width="21" height="12" viewBox="0 0 21 12" fill="#464646" shapeRendering="crispEdges">
            <path d="M0 0H10V2H0ZM4 2H6V12H4ZM2 3H3V5H2ZM7 3H8V5H7ZM9 10H11V12H9ZM12 8H14V12H12ZM15 5H17V12H15ZM18 1H20V12H18Z" />
          </svg>
          <span className="font-['Noto_Sans',sans-serif] text-[13px] font-normal">11:31</span>
        </div>
      </div>
      <div className="h-0.5 bg-gradient-to-r from-[#2c4458] via-[#7c9cb4] to-[#30485c]" />
    </footer>
  );
}

export default function App() {
  return (
    <div className="flex min-h-screen flex-col overflow-hidden bg-[#bcbcbc] font-['Noto_Sans_CJK_SC',sans-serif]">
      <MenuBar />
      <Toolbar />
      <div className="flex">
        <SideTabs />
        <main className="grid min-w-0 flex-1 grid-cols-4 gap-x-0.5 gap-y-px bg-black">
          {CHARTS.map((c) => (
            <ChartPanel key={c.title} chart={c} />
          ))}
          <IntradayPanel />
        </main>
      </div>
      <StatusBar />
    </div>
  );
}
